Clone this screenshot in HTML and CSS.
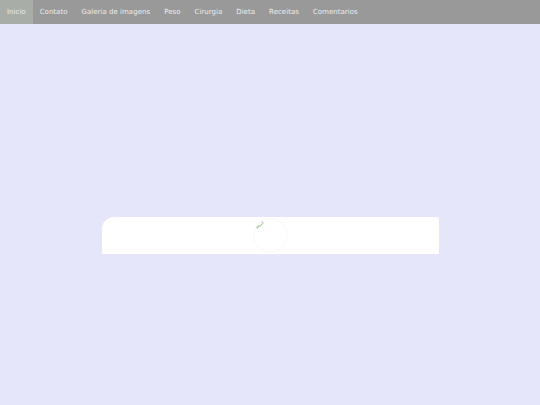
FILE: index.html
```html
<!DOCTYPE html>
<html lang="pt">
<head>
<meta charset="utf-8">
<title>Inicio</title>
<link rel="stylesheet" href="styles.css">
</head>
<body>
<nav class="menu">
  <a class="item active" href="#">Inicio</a>
  <a class="item" href="#">Contato</a>
  <a class="item" href="#">Galeria de imagens</a>
  <a class="item" href="#">Peso</a>
  <a class="item" href="#">Cirurgia</a>
  <a class="item" href="#">Dieta</a>
  <a class="item" href="#">Receitas</a>
  <a class="item" href="#">Comentarios</a>
</nav>
<main class="stage">
  <div class="panel">
    <div class="loader">
      <svg class="broken" width="8" height="8" viewBox="0 0 8 8">
        <path d="M1 6.5 L3 4.5 L4 5.5 L6.5 2.5" stroke="#8fb87c" stroke-width="1" fill="none"/>
        <path d="M5 1 L7 1 L7 3" stroke="#b0cca3" stroke-width="0.8" fill="none"/>
        <rect x="0.5" y="5.5" width="2" height="2" fill="#b5d0a9"/>
      </svg>
    </div>
  </div>
</main>
</body>
</html>
```
FILE: styles.css
```css
html, body {
  margin: 0;
  padding: 0;
}
body {
  background: #e6e6fa;
  width: 540px;
  height: 405px;
  font-family: "DejaVu Sans", Verdana, sans-serif;
}
.menu {
  display: flex;
  height: 24px;
  background: #999999;
}
.item {
  display: flex;
  align-items: center;
  padding: 0 7px;
  font-size: 7.05px;
  color: #ececec;
  text-decoration: none;
  line-height: 1;
}
.item.active {
  background: #a8ada8;
}
.stage {
  display: flex;
  justify-content: center;
  padding-top: 193px;
  padding-left: 1px;
}
.panel {
  width: 337px;
  height: 37px;
  background: #ffffff;
  border-radius: 12px 2px 0 0;
  display: flex;
  justify-content: center;
  align-items: center;
}
.loader {
  position: relative;
  width: 33px;
  height: 33px;
  border-radius: 50%;
  box-shadow: 0 0 0 0.5px #f2f2f2;
}
.broken {
  position: absolute;
  left: 2px;
  top: 2px;
}
```
